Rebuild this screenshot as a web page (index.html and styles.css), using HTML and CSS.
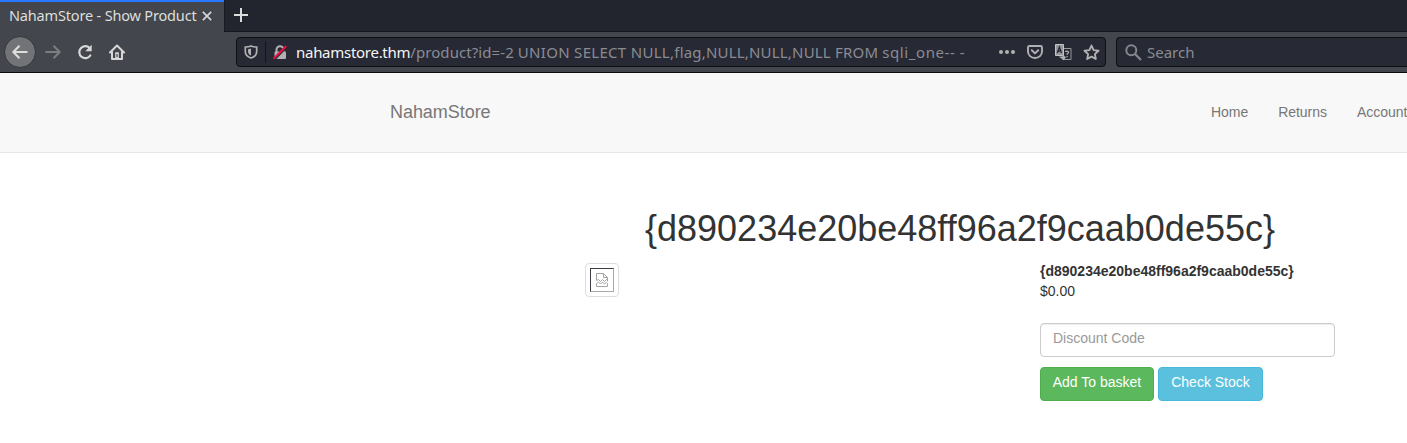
FILE: index.html
```html
<!DOCTYPE html>
<html lang="en">
<head>
<meta charset="utf-8">
<title>NahamStore - Show Product</title>
<link rel="stylesheet" href="styles.css">
</head>
<body>
<div class="tabbar">
  <div class="tab"><span class="tab-title">NahamStore - Show Product</span>
    <svg class="tab-close" width="10" height="10" viewBox="0 0 10 10"><path d="M.8.8l8.4 8.4M9.2.8L.8 9.2" stroke="#d6d6d6" stroke-width="1.7"/></svg>
  </div>
  <div class="tab-rest">
    <svg width="14" height="14" viewBox="0 0 14 14"><path d="M7 0v14M0 7h14" stroke="#dcdcdc" stroke-width="2"/></svg>
  </div>
</div>
<div class="toolbar">
  <span class="back"><svg width="16" height="16" viewBox="0 0 16 16"><path d="M15.5 8H1.5M7.5 1.8L1.3 8l6.2 6.2" fill="none" stroke="#dededc" stroke-width="2" stroke-linejoin="round"/></svg></span>
  <svg class="forward" width="16" height="16" viewBox="0 0 16 16"><path d="M.5 8h14M8.5 1.8L14.7 8l-6.2 6.2" fill="none" stroke="#7d7e82" stroke-width="2" stroke-linejoin="round"/></svg>
  <svg class="reload" width="16" height="16" viewBox="0 0 16 16"><path d="M13.3 11.5A6 6 0 1 1 12.6 4" fill="none" stroke="#d8d8d8" stroke-width="2.2" stroke-linecap="round"/><path d="M14.7.8v6.4H8.3z" fill="#d8d8d8"/></svg>
  <svg class="home" width="16" height="16" viewBox="0 0 16 16"><path d="M1 8.500L8 1.500l7 7M3 7.500V15h10V7.500" fill="none" stroke="#d8d8d8" stroke-width="2" stroke-linejoin="round" stroke-linecap="round"/><path d="M6.200 8.300h3.600V15H6.200z" fill="#d8d8d8"/><path d="M7.400 10h1.200v3H7.400z" fill="#43464c"/></svg>
  <div class="field url">
    <svg class="shield" width="14" height="14" viewBox="0 0 14 14"><path d="M7 1C5 1.900 3 2 1.300 2v4.500C1.300 9.500 4 12 7 13c3-1 5.700-3.500 5.700-6.500V2C11 2 9 1.900 7 1z" fill="none" stroke="#b1b1b3" stroke-width="1.700"/><path d="M7 3.600c-1 .4-2 .5-3 .6v2.500C4.100 8.500 5.400 9.800 7 10.500z" fill="#b1b1b3"/></svg>
    <span class="divider"></span>
    <svg class="lock" width="14" height="15" viewBox="0 0 14 15"><path d="M3.500 7V4.700a3.500 3.500 0 0 1 7 0V7" fill="none" stroke="#b1b1b3" stroke-width="2"/><rect x="1.500" y="6.500" width="11.500" height="7.500" rx="1" fill="#b1b1b3"/><path d="M1 14.500L13.500 2" stroke="#272934" stroke-width="2.600"/><path d="M.5 13.800L13.300 1" stroke="#f50a43" stroke-width="2"/></svg>
    <span class="address"><b>nahamstore.thm</b><span class="path">/product?id=-2 </span><span class="sql">UNION SELECT NULL,</span><span class="mid">flag,NULL,NULL,NULL FROM </span><span class="wide">sqli_one-- -</span></span>
    <svg class="dots" width="16" height="16" viewBox="0 0 16 16"><g fill="#b1b1b3"><circle cx="2" cy="8" r="2"/><circle cx="8" cy="8" r="2"/><circle cx="14" cy="8" r="2"/></g></svg>
    <svg class="pocket" width="16" height="16" viewBox="0 0 16 16"><path d="M2.500 2h11c.8 0 1.500.6 1.500 1.400V7.500a7 6.500 0 0 1-14 0V3.400C1 2.600 1.700 2 2.500 2z" fill="none" stroke="#b1b1b3" stroke-width="1.900"/><path d="M4.800 6.300L8 9.400l3.200-3.100" fill="none" stroke="#b1b1b3" stroke-width="2" stroke-linecap="round" stroke-linejoin="round"/></svg>
    <svg class="translate" width="17" height="17" viewBox="0 0 17 17"><path d="M8 4.500h8v11H7.500v-3" fill="none" stroke="#97989c"/><path d="M.5.5h8v11h-8z" fill="#96979c" stroke="#c2c3c5"/><path d="M2.300 9L4.400 3 6.500 9M3 7h3" fill="none" stroke="#272934" stroke-width="1.300"/><path d="M10.500 8c.3-1.200 3-1.200 3 .3 0 1.200-1.500 1-1.500 2.400M12 12v1.200" fill="none" stroke="#b1b1b3" stroke-width="1.200"/><path d="M4 12.500h4v-2l3 3-3 3v-2H6z" fill="#b1b1b3"/></svg>
    <svg class="star" width="17" height="17" viewBox="0 0 17 17"><path d="M8.500 1.600l2.100 4.500 4.900.6-3.600 3.400.9 4.900-4.300-2.400L4.200 15l.9-4.900-3.600-3.400 4.900-.6z" fill="none" stroke="#b1b1b3" stroke-width="1.900" stroke-linejoin="round"/></svg>
  </div>
  <div class="field search">
    <svg width="17" height="17" viewBox="0 0 17 17"><circle cx="6.300" cy="6.300" r="5" fill="none" stroke="#85868c" stroke-width="2"/><path d="M10 10l6 6" stroke="#85868c" stroke-width="2.300"/></svg>
    <span>Search</span>
  </div>
</div>
<div class="page">
  <nav class="navbar">
    <div class="container nav-row">
      <a class="brand">NahamStore</a>
      <div class="links"><a>Home</a><a>Returns</a><a>Account</a></div>
    </div>
  </nav>
  <main class="container">
    <h1>{d890234e20be48ff96a2f9caab0de55c}</h1>
    <div class="product">
      <div class="picture">
        <div class="thumb"><div class="missing"><svg width="12" height="14" viewBox="0 0 12 14" fill="none" stroke="#a4a4a4"><path d="M.5 7.500v-7h7l4 4v4M7.500.5v4h4"/><path d="M.5 7.500l2-1 2 2 2-2 2 2 2-2 1.500 1M.5 13.500v-3l2-1.500 2 2 2-2 2 2 2-1.500 1 1v3z"/></svg></div></div>
      </div>
      <div class="details">
        <div class="flag"><b>{d890234e20be48ff96a2f9caab0de55c}</b></div>
        <div>$0.00</div>
        <div class="input">Discount Code</div>
        <div class="buttons"><a class="btn add">Add To basket</a><a class="btn check">Check Stock</a></div>
      </div>
    </div>
  </main>
</div>
</body>
</html>
```
FILE: styles.css
```css
* { box-sizing: border-box; }
html, body { margin: 0; width: 1407px; height: 443px; overflow: hidden; background: #fff; }
svg { display: block; flex: none; }
.tabbar, .toolbar { display: flex; font-family: "Noto Sans", sans-serif; font-size: 15px; white-space: nowrap; }
.tabbar { height: 32px; background: #43464c; }
.tab { width: 224px; border-top: 2px solid #2878ff; display: flex; align-items: center; padding: 0 0 4px 9px; color: #dededc; }
.tab-title { width: 193px; font-size: 14.5px; letter-spacing: -0.17px; }
.tab-close { margin-top: 2px; }
.tab-rest { flex: 1; background: #23252e; border-left: 1px solid #181a20; border-bottom: 1px solid #15171c; padding: 8px 0 0 9px; }
.toolbar { height: 41px; background: #43464c; border-bottom: 1px solid #0c0c0d; padding-left: 4px; align-items: center; }
.back { flex: none; width: 32px; height: 32px; border-radius: 50%; background: #727377; border: 1px solid #34363b; display: flex; align-items: center; justify-content: center; }
.forward { margin-left: 9px; }
.reload { margin-left: 16px; }
.home { margin-left: 16px; }
.field { height: 30px; border: 1px solid #0e0f13; border-radius: 4px; background: #272934; display: flex; align-items: center; flex: none; }
.url { width: 870px; margin-left: 111px; padding-left: 7px; color: #8b8c93; }
.divider { width: 1px; height: 22px; background: #15161c; margin: 0 7px; }
.address { margin-left: 9px; width: 703px; white-space: pre; }
.address b { font-weight: 400; color: #f6f6f6; letter-spacing: -0.28px; }
.path { letter-spacing: 0.08px; }
.sql { letter-spacing: 0.3px; }
.mid { letter-spacing: 0.19px; }
.wide { letter-spacing: 0.58px; }
.pocket { margin-left: 12px; }
.translate { margin-left: 12px; }
.star { margin-left: 11px; }
.search { flex: 1; margin-left: 10px; padding-left: 8px; color: #8b8c93; border-right: 0; border-radius: 4px 0 0 4px; }
.search span { margin-left: 5px; }
.page { font: 14px/20px "Liberation Sans", Arial, sans-serif; color: #333; width: 1920px; }
.navbar { height: 80px; background: #f8f8f8; border-bottom: 1px solid #e7e7e7; color: #777; }
.container { width: 1170px; margin: 0 auto; }
.nav-row { display: flex; justify-content: space-between; padding: 29px 0 0 15px; }
.brand { font-size: 18px; letter-spacing: -0.05px; }
.links { display: flex; gap: 30px; width: 334px; letter-spacing: -0.04px; }
h1 { margin: 56px 0 0; font-size: 36px; font-weight: 500; line-height: 40px; text-align: center; }
.product { display: flex; padding: 12px 0 0 210px; }
.picture { width: 455px; padding-top: 2px; }
.thumb { width: 34px; height: 34px; border: 1px solid #ddd; border-radius: 4px; padding: 4px; }
.missing { width: 24px; height: 24px; border: 1px solid; border-color: #3c3c44 #aaa #aaa #3c3c44; display: flex; align-items: center; justify-content: center; }
.details { width: 295px; }
.input { margin-top: 22px; height: 34px; border: 1px solid #ccc; border-radius: 4px; box-shadow: inset 0 1px 1px rgba(0,0,0,.075); padding: 4px 12px; color: #999; }
.buttons { display: flex; gap: 4px; margin-top: 10px; }
.btn { height: 34px; border: 1px solid; border-radius: 4px; color: #fff; text-align: center; padding-top: 4px; white-space: nowrap; }
.add { width: 114px; background: #5cb85c; border-color: #4cae4c; }
.check { width: 105px; background: #5bc0de; border-color: #46b8da; }
```
